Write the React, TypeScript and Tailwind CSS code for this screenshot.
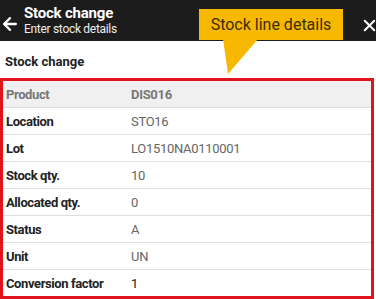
import { ArrowLeft, X } from 'lucide-react'

const rows = [
  { label: 'Product', value: 'DIS016', head: true },
  { label: 'Location', value: 'STO16' },
  { label: 'Lot', value: 'LO1510NA0110001' },
  { label: 'Stock qty.', value: '10' },
  { label: 'Allocated qty.', value: '0' },
  { label: 'Status', value: 'A' },
  { label: 'Unit', value: 'UN' },
  { label: 'Conversion factor', value: '1', dark: true },
]

export default function App() {
  return (
    <div className="relative w-[376px] h-[299px] bg-white overflow-hidden" style={{ fontFamily: 'Roboto, "Open Sans", sans-serif' }}>
      <header className="flex items-center h-[41px] bg-[#1c1c1c] text-white">
        <ArrowLeft className="w-[20px] h-[20px] ml-0 mt-[6px] shrink-0" strokeWidth={2.75} />
        <div className="ml-[4px] leading-none">
          <div className="text-[15px] font-bold tracking-[-0.2px]">Stock change</div>
          <div className="text-[12px] mt-[2px] tracking-[-0.3px] text-[#eee]">Enter stock details</div>
        </div>
        <X className="ml-auto mr-[-3px] w-[19px] h-[19px] mt-[10px] shrink-0" strokeWidth={2.5} />
      </header>

      <div className="absolute left-[199px] top-[9px] w-[144px] h-[31px] bg-[#f8b800] flex items-center justify-center text-[16px] text-[#3b2e00]">
        Stock line details
      </div>
      <svg className="absolute left-[222px] top-[39px]" width="38" height="36" viewBox="0 0 38 36">
        <polygon points="1,0 36,0 6,35" fill="#f8b800" />
      </svg>

      <div className="px-[5px] pt-[13px] pb-[8px] text-[13px] font-bold text-[#222] leading-[16px]">Stock change</div>

      <div className="w-[374px] h-[221px] border-[3px] border-[#e0141c] text-[13px]">
        {rows.map((r, i) => (
          <div
            key={r.label}
            className={`flex items-center h-[27px] pt-[1px] ${i < rows.length - 1 ? 'border-b border-[#dedede]' : ''} ${r.head ? 'bg-[#f0f0f0]' : ''}`}
          >
            <div className={`w-[128px] pl-[3px] font-bold tracking-[-0.4px] ${r.head ? 'text-[#777]' : 'text-[#222]'}`}>{r.label}</div>
            <div className={`tracking-[-0.3px] ${r.head ? 'font-bold text-[#777]' : r.dark ? 'text-[#222]' : 'text-[#666]'}`}>{r.value}</div>
          </div>
        ))}
      </div>
    </div>
  )
}
